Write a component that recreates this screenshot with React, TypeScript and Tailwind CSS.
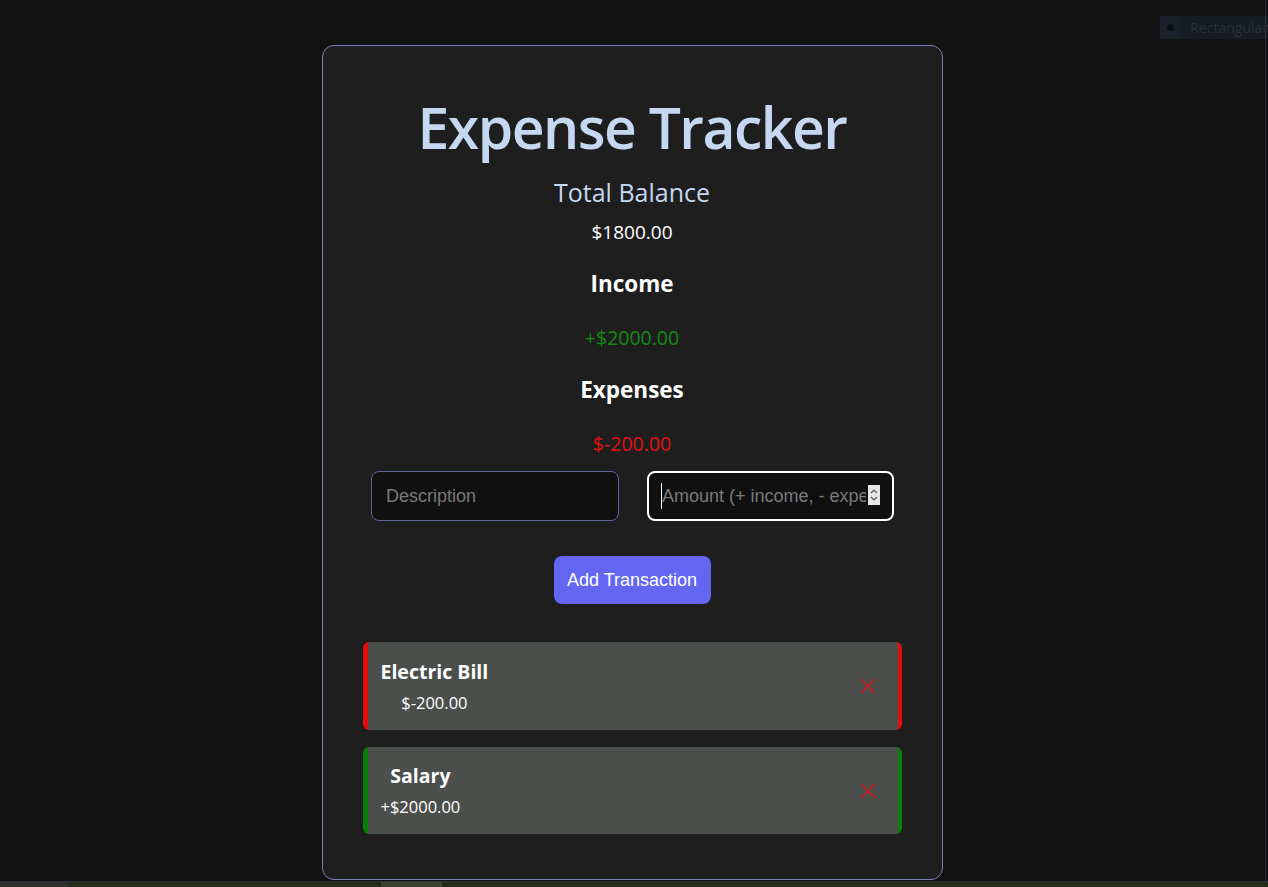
type Transaction = {
  id: number;
  text: string;
  amount: number;
};

const transactions: Transaction[] = [
  { id: 1, text: "Electric Bill", amount: -200 },
  { id: 2, text: "Salary", amount: 2000 },
];

const formatAmount = (amount: number) =>
  amount < 0 ? `$${amount.toFixed(2)}` : `+$${amount.toFixed(2)}`;

function TransactionItem({ item }: { item: Transaction }) {
  const isExpense = item.amount < 0;
  return (
    <li
      className={
        isExpense
          ? "flex h-[88px] items-center justify-between rounded-md border-l-[5px] border-r-[4px] border-[#e50d0d] bg-[#4b4f4c] pl-[13px] pr-[22px]"
          : "flex h-[87px] items-center justify-between rounded-md border-l-[5px] border-r-[4px] border-[#0b7f0b] bg-[#4b4f4c] pl-[13px] pr-[22px]"
      }
    >
      <div className="flex flex-col items-center gap-[7px]">
        <span className="text-[19.5px] font-bold leading-[26px] text-white">{item.text}</span>
        <span className="text-[16.5px] leading-[22px] text-white">{formatAmount(item.amount)}</span>
      </div>
      <button type="button" className="text-[#b3262a]">
        <svg width="16" height="16" viewBox="0 0 16 16" fill="none" stroke="currentColor" strokeWidth="2">
          <path d="M1 1 L15 15" />
          <path d="M15 1 L1 15" />
        </svg>
      </button>
    </li>
  );
}

export default function App() {
  return (
    <div
      className="relative min-h-[887px] w-full bg-[#121212] pr-[4px] pt-[45px]"
      style={{ fontFamily: '"Open Sans", "Noto Sans", sans-serif' }}
    >
      <div className="absolute right-0 top-[16px] flex h-[23px] w-[108px] items-center bg-[#161b24] text-[14px] text-[#2a2f38]">
        <span className="flex h-full w-[24px] items-center justify-center bg-[#18202c]">
          <span className="size-[7px] rounded-full bg-[#0c0f14]" />
        </span>
        <span className="pl-[10px]">Rectangular</span>
      </div>

      <div className="mx-auto flex h-[835px] w-[621px] flex-col items-center rounded-[12px] border border-[#7a7fc0] bg-[#1e1e1e] px-[40px] pt-[41px]">
        <h1 className="h-[80px] text-center text-[57px] font-semibold leading-[80px] tracking-[-1.5px] text-[#c6d7f1]">
          Expense Tracker
        </h1>
        <h2 className="mt-[9px] h-[32px] text-[25px] font-medium leading-[32px] text-[#c6d7f1]">
          Total Balance
        </h2>
        <p className="mt-[12px] h-[24px] text-[19px] leading-[24px] text-white">$1800.00</p>

        <h3 className="mt-[25px] h-[30px] text-[22.5px] font-bold leading-[30px] text-white">Income</h3>
        <p className="mt-[27px] h-[24px] text-[19.5px] leading-[24px] text-[#138a13]">+$2000.00</p>

        <h3 className="mt-[25px] h-[30px] text-[22.5px] font-bold leading-[30px] text-white">Expenses</h3>
        <p className="mt-[27px] h-[24px] text-[19.5px] leading-[24px] text-[#e01212]">$-200.00</p>

        <div className="mt-[15px] flex gap-[28px] pl-[1px]" style={{ fontFamily: '"Liberation Sans", Arial, sans-serif' }}>
          <input
            type="text"
            placeholder="Description"
            className="h-[50px] w-[248px] rounded-[8px] border border-[#5f63a8] bg-[#101010] px-[14px] text-[18px] text-white outline-none placeholder:text-[#7a7a7a]"
          />
          <div className="relative">
            <input
              type="text"
              placeholder="Amount (+ income, - expense)"
              className="h-[50px] w-[247px] rounded-[8px] border-2 border-white bg-[#101010] pl-[13px] pr-[26px] text-[18px] text-white outline-none placeholder:text-[#7a7a7a]"
            />
            <span className="absolute left-[14px] top-[12px] h-[26px] w-px bg-white" />
            <span className="absolute right-[14px] top-[14px] flex h-[20px] w-[12px] flex-col items-center justify-center bg-[#e6e6e6] text-[#555]">
              <svg width="8" height="16" viewBox="0 0 8 16" fill="none" stroke="currentColor" strokeWidth="1.2">
                <path d="M1 6 L4 3 L7 6" />
                <path d="M1 10 L4 13 L7 10" />
              </svg>
            </span>
          </div>
        </div>

        <button
          type="button"
          className="mt-[35px] h-[48px] w-[157px] rounded-[8px] bg-[#6366f1] text-[18px] text-white"
          style={{ fontFamily: '"Liberation Sans", Arial, sans-serif' }}
        >
          Add Transaction
        </button>

        <ul className="mt-[38px] flex w-full flex-col gap-[17px]">
          {transactions.map((item) => (
            <TransactionItem key={item.id} item={item} />
          ))}
        </ul>
      </div>

      <div className="absolute bottom-0 left-0 right-0 h-[6px] border-t border-[#2a2d3a] bg-[#262a1c]">
        <span className="absolute left-0 top-0 h-full w-[68px] bg-[#2e2e2e]" />
        <span className="absolute left-[381px] top-0 h-full w-[61px] bg-[#3e4236]" />
      </div>
      <div className="absolute right-[2px] top-0 h-[881px] w-px bg-[#2a2d44]" />
    </div>
  );
}
